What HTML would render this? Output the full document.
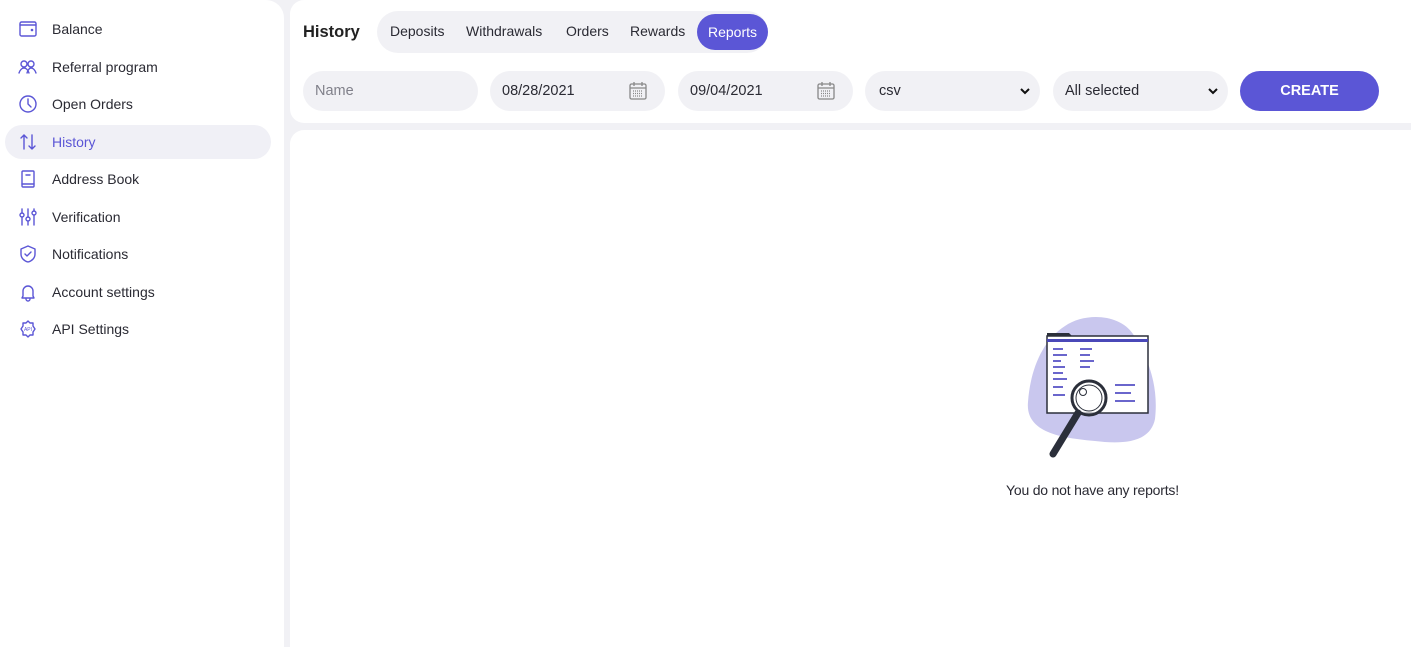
<!DOCTYPE html>
<html><head><meta charset="utf-8"><style>
*{box-sizing:border-box;margin:0;padding:0}
body{width:1411px;height:647px;background:#f1f1f5;font-family:"Liberation Sans",sans-serif;position:relative;overflow:hidden;color:#262630}
.side{position:absolute;left:0;top:0;width:284px;height:647px;background:#fff;border-top-right-radius:18px}
.item{position:absolute;left:5px;width:266px;height:34px;border-radius:17px;display:flex;align-items:center;font-size:14px;color:#2a2a33}
.item svg{position:absolute;left:13px;top:7px;width:20px;height:20px;fill:none;stroke:#5b56d6;stroke-width:1.4;stroke-linecap:round;stroke-linejoin:round}
.item span{position:absolute;left:47px;top:9px}
.item.act{background:#f0f0f6;color:#5b56d6}
.head{position:absolute;left:290px;top:0;width:1121px;height:123px;background:#fff;border-radius:14px 0 0 14px}
.content{position:absolute;left:290px;top:130px;width:1121px;height:517px;background:#fff;border-top-left-radius:14px}
.title{position:absolute;left:303px;top:23px;font-size:16.5px;font-weight:bold;color:#222}
.tabs{position:absolute;left:377px;top:11px;width:391px;height:42px;background:#f1f1f5;border-radius:21px}
.tab{position:absolute;top:23px;font-size:14px;color:#2a2a33}
.rep{position:absolute;left:697px;top:14px;width:71px;height:36px;border-radius:18px;background:#5b56d6;color:#fff;font-size:14px;text-align:center;line-height:36px}
.inp{position:absolute;top:71px;height:40px;width:175px;background:#f1f1f5;border-radius:20px;font-size:14.5px;line-height:41px;padding-left:12px;color:#2a2a33}
.inp svg{position:absolute;right:17px;top:10px}
.btn{position:absolute;left:1240px;top:71px;width:139px;height:40px;border-radius:20px;background:#5b56d6;color:#fff;font-weight:bold;font-size:14.5px;text-align:center;line-height:40px}
.msg{position:absolute;left:1006px;top:482px;font-size:14px;color:#2a2a33;letter-spacing:-0.2px}
</style></head><body>
<div class="side">
<div class="item" style="top:12px"><svg viewBox="0 0 20 20"><rect x="2" y="3" width="16" height="14" rx="1.5"/><path d="M2 6h16"/><circle cx="14" cy="11" r=".6" fill="#5b56d6"/></svg><span>Balance</span></div>
<div class="item" style="top:50px"><svg viewBox="0 0 20 20"><circle cx="6" cy="7" r="3"/><circle cx="13" cy="7" r="3"/><path d="M1 16c1-3 3-5 5-5s4 2 5 5M9 16c1-3 2-5 4-5s4 2 5 5"/></svg><span>Referral program</span></div>
<div class="item" style="top:87px"><svg viewBox="0 0 20 20"><circle cx="10" cy="10" r="8"/><path d="M10 5v5l3 3"/></svg><span>Open Orders</span></div>
<div class="item act" style="top:125px"><svg viewBox="0 0 20 20"><path d="M6 17V3M3 6l3-3 3 3M14 3v14M11 14l3 3 3-3"/></svg><span>History</span></div>
<div class="item" style="top:162px"><svg viewBox="0 0 20 20"><rect x="4" y="2" width="12" height="16" rx="1"/><path d="M4 15h12M8 6h4"/></svg><span>Address Book</span></div>
<div class="item" style="top:200px"><svg viewBox="0 0 20 20"><path d="M4 2v4M4 10v8M10 2v8M10 14v4M16 2v2M16 8v10"/><circle cx="4" cy="8" r="2"/><circle cx="10" cy="12" r="2"/><circle cx="16" cy="6" r="2"/></svg><span>Verification</span></div>
<div class="item" style="top:237px"><svg viewBox="0 0 20 20"><path d="M10 2l7 3v5c0 4-3 7-7 8-4-1-7-4-7-8V5z"/><path d="M7 10l2 2 4-4"/></svg><span>Notifications</span></div>
<div class="item" style="top:275px"><svg viewBox="0 0 20 20"><path d="M5 14V9a5 5 0 0110 0v5l1 2H4z"/><path d="M8 17a2 2 0 004 0"/></svg><span>Account settings</span></div>
<div class="item" style="top:312px"><svg viewBox="0 0 20 20"><path d="M10 2l2 2h3v3l2 3-2 3v3h-3l-2 2-2-2H5v-3l-2-3 2-3V4h3z"/><text x="10" y="12" font-size="5" text-anchor="middle" fill="#5b56d6" stroke="none" font-family="Liberation Sans">API</text></svg><span>API Settings</span></div>
</div>
<div class="head"></div>
<div class="content"></div>
<div class="title">History</div>
<div class="tabs"></div>
<div class="tab" style="left:390px">Deposits</div>
<div class="tab" style="left:466px">Withdrawals</div>
<div class="tab" style="left:566px">Orders</div>
<div class="tab" style="left:630px">Rewards</div>
<div class="rep">Reports</div>
<div class="inp" style="left:303px;color:#80808a">Name</div>
<div class="inp" style="left:490px">08/28/2021<svg width="20" height="20" viewBox="0 0 20 20" fill="none" stroke="#888" stroke-width="1.3"><rect x="2" y="3" width="16" height="15" rx="1.5"/><path d="M2 7h16M6 1v4M14 1v4"/><path d="M5 10h10M5 12.5h10M5 15h10" stroke-dasharray="1 1"/></svg></div>
<div class="inp" style="left:678px">09/04/2021<svg width="20" height="20" viewBox="0 0 20 20" fill="none" stroke="#888" stroke-width="1.3"><rect x="2" y="3" width="16" height="15" rx="1.5"/><path d="M2 7h16M6 1v4M14 1v4"/><path d="M5 10h10M5 12.5h10M5 15h10" stroke-dasharray="1 1"/></svg></div>
<div class="inp" style="left:865px;padding-left:14px">csv<svg style="right:9px" width="12" height="20" viewBox="0 0 12 20" fill="none" stroke="#111" stroke-width="2"><path d="M2 8l4 4 4-4"/></svg></div>
<div class="inp" style="left:1053px">All selected<svg style="right:9px" width="12" height="20" viewBox="0 0 12 20" fill="none" stroke="#111" stroke-width="2"><path d="M2 8l4 4 4-4"/></svg></div>
<div class="btn">CREATE</div>
<svg style="position:absolute;left:1025px;top:314px" width="135" height="148" viewBox="0 0 135 148">
<path d="M40 12C60-2 95 0 108 20c14 22 26 50 22 85-5 25-35 25-60 22C40 124 0 120 3 88 5 60 15 28 40 12z" fill="#c9c7ee"/>
<rect x="22" y="22" width="101" height="77" fill="#fff" stroke="#2b2f3a" stroke-width="1.5"/>
<path d="M22 22v-3h22l3 3z" fill="#2b2f3a"/>
<rect x="22" y="25" width="101" height="3" fill="#4a48b8"/>
<g fill="#6a66cc"><rect x="28" y="34" width="10" height="2"/><rect x="28" y="40" width="14" height="2"/><rect x="28" y="46" width="8" height="2"/><rect x="28" y="52" width="12" height="2"/><rect x="28" y="58" width="10" height="2"/><rect x="28" y="64" width="14" height="2"/><rect x="28" y="72" width="10" height="2"/><rect x="28" y="80" width="12" height="2"/><rect x="55" y="34" width="12" height="2"/><rect x="55" y="40" width="10" height="2"/><rect x="55" y="46" width="14" height="2"/><rect x="55" y="52" width="10" height="2"/><rect x="90" y="70" width="20" height="2"/><rect x="90" y="78" width="16" height="2"/><rect x="90" y="86" width="20" height="2"/></g>
<circle cx="64" cy="84" r="17" fill="#fff" fill-opacity=".6" stroke="#2b2f3a" stroke-width="3"/>
<circle cx="64" cy="84" r="13" fill="none" stroke="#2b2f3a" stroke-width="1"/>
<circle cx="58" cy="78" r="3.5" fill="#fff" stroke="#2b2f3a"/>
<path d="M53 99l-25 41" stroke="#2b2f3a" stroke-width="7" stroke-linecap="round"/>
</svg>
<div class="msg">You do not have any reports!</div>
</body></html>
